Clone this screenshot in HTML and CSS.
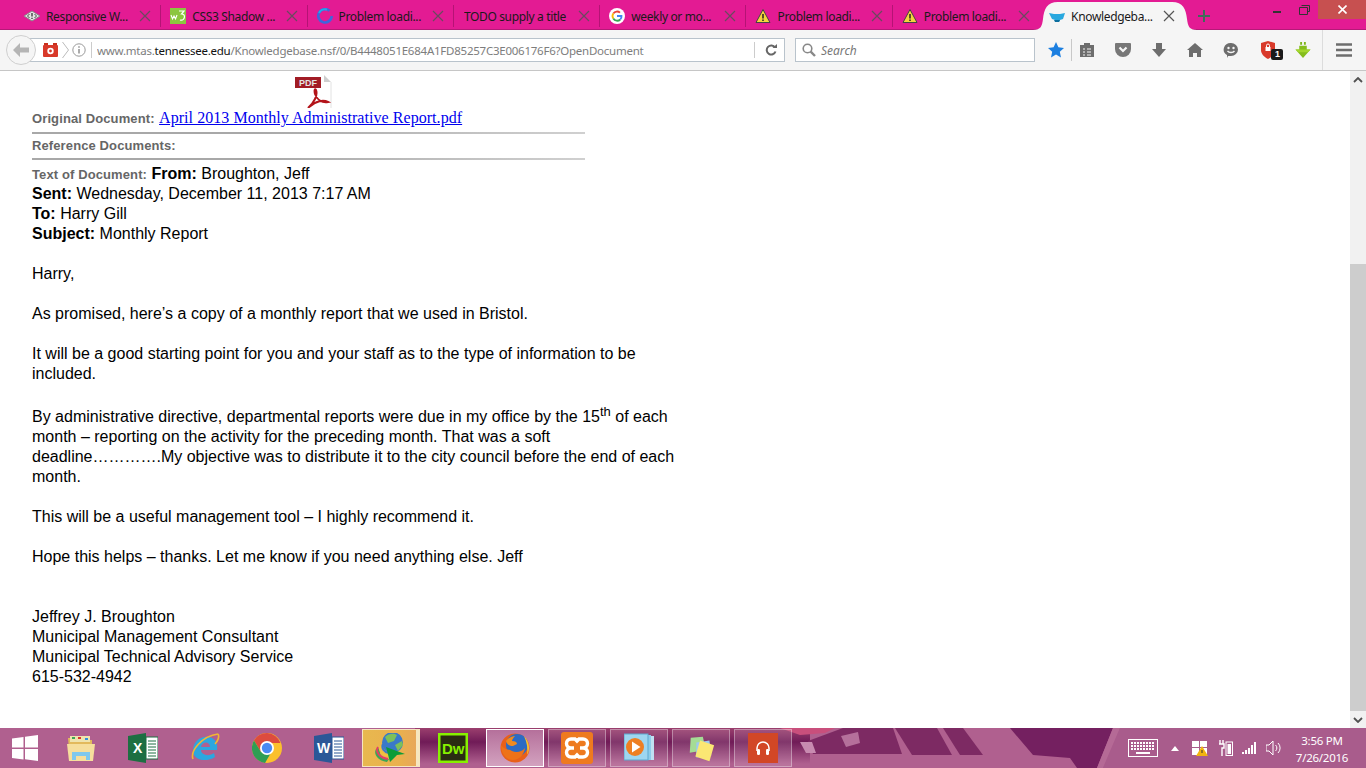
FILE: index.html
```html
<!DOCTYPE html>
<html lang="en">
<head>
<meta charset="utf-8">
<title>Knowledgebase</title>
<link rel="stylesheet" href="styles.css">
</head>
<body>
<div class="tabbar">
  <div class="tab"><svg class="fav" viewBox="0 0 16 16"><path d="M0 8l8-5 8 5-8 5z" fill="#e4e4e4" stroke="#888"/><path d="M5.500 6L3.500 8l2 2M10.500 6l2 2-2 2" fill="none" stroke="#444"/><path d="M8 5v3.500M8 9.800v1.200" stroke="#333" stroke-width="1.300"/></svg><span class="tt">Responsive W...</span><svg class="x" viewBox="0 0 12 12"><path d="M1 1l10 10M11 1L1 11"/></svg></div>
  <div class="tab"><svg class="fav" viewBox="0 0 16 16"><rect width="16" height="16" fill="#8cc63f"/><path d="M1 7l1.500 4 1.500-3 1.500 3L7 7" fill="none" stroke="#fff" stroke-width="1.100"/><path d="M9 3h5l-2.500 3c2.500 0 3 1.300 3 2.800S13 13 10 12" fill="none" stroke="#fff" stroke-width="1.200"/></svg><span class="tt">CSS3 Shadow ...</span><svg class="x" viewBox="0 0 12 12"><path d="M1 1l10 10M11 1L1 11"/></svg></div>
  <div class="tab"><svg class="fav" viewBox="0 0 16 16"><path d="M12.500 2.800A6.700 6.700 0 1 0 14.700 8" fill="none" stroke="#3f66dc" stroke-width="2.600"/><path d="M2 5A6.700 6.700 0 0 1 10 1.600" fill="none" stroke="#27a6e8" stroke-width="2.200"/></svg><span class="tt">Problem loadi...</span><svg class="x" viewBox="0 0 12 12"><path d="M1 1l10 10M11 1L1 11"/></svg></div>
  <div class="tab tab-plain"><span class="tt">TODO supply a title</span><svg class="x" viewBox="0 0 12 12"><path d="M1 1l10 10M11 1L1 11"/></svg></div>
  <div class="tab"><svg class="fav" viewBox="0 0 16 16"><circle cx="8" cy="8" r="8" fill="#fff"/><path d="M4.300 5.500A4.500 4.500 0 0 1 11 4.600" fill="none" stroke="#ea4335" stroke-width="1.800"/><path d="M4.300 5.500a4.500 4.500 0 0 0 0 5" fill="none" stroke="#fbbc05" stroke-width="1.800"/><path d="M4.300 10.500a4.500 4.500 0 0 0 7 1" fill="none" stroke="#34a853" stroke-width="1.800"/><path d="M11.300 11.500A4.500 4.500 0 0 0 12.500 8H8" fill="none" stroke="#4285f4" stroke-width="1.800"/></svg><span class="tt">weekly or mo...</span><svg class="x" viewBox="0 0 12 12"><path d="M1 1l10 10M11 1L1 11"/></svg></div>
  <div class="tab"><svg class="fav" viewBox="0 0 16 16"><path d="M8 1.500L15 14.500H1z" fill="#f5d33c" stroke="#444"/><path d="M8 6v4.500M8 11.500v1.500" stroke="#222" stroke-width="1.500"/></svg><span class="tt">Problem loadi...</span><svg class="x" viewBox="0 0 12 12"><path d="M1 1l10 10M11 1L1 11"/></svg></div>
  <div class="tab tab-nosep"><svg class="fav" viewBox="0 0 16 16"><path d="M8 1.500L15 14.500H1z" fill="#f5d33c" stroke="#444"/><path d="M8 6v4.500M8 11.500v1.500" stroke="#222" stroke-width="1.500"/></svg><span class="tt">Problem loadi...</span><svg class="x" viewBox="0 0 12 12"><path d="M1 1l10 10M11 1L1 11"/></svg></div>
  <div class="tab tab-active">
    <svg class="tab-shape" viewBox="0 0 164 28"><path d="M0 28C8 28 9 24 10 17 11 7 14 0 25 0H139C150 0 153 7 154 17 155 24 156 28 164 28z" fill="#f5f5f5"/></svg>
    <svg class="fav" viewBox="0 0 16 16"><path d="M0 5l5 1h6l5-1-2 6-3 1-1 2H7l-1-2-3-1z" fill="#29a8df"/><path d="M5 12h6l-1 2H6z" fill="#0c6f9f"/></svg><span class="tt">Knowledgeba...</span><svg class="x" viewBox="0 0 12 12"><path d="M1 1l10 10M11 1L1 11"/></svg>
  </div>
  <svg class="newtab" viewBox="0 0 12 12"><path d="M6 0v12M0 6h12"/></svg>
  <div class="winctl">
    <svg class="win-min" viewBox="0 0 8 2"><rect width="8" height="2" fill="#333"/></svg>
    <svg class="win-max" viewBox="0 0 11 10"><path d="M2.500.5h8v6h-2M.5 2.500h8v7h-8z" fill="none" stroke="#333"/></svg>
    <div class="win-close"><svg viewBox="0 0 9 9"><path d="M.5.500l8 8M8.500.500l-8 8" stroke="#fff" stroke-width="1.600"/></svg></div>
  </div>
</div>

<div class="toolbar">
  <div class="back"><svg viewBox="0 0 16 14"><path d="M7 0L0 7l7 7V9.500h9v-5H7z" fill="#b5b5b5"/></svg></div>
  <div class="urlbar">
    <svg class="cam" viewBox="0 0 15 14"><path d="M1 0h4v2H1zM10 0h4v2h-4z" fill="#c8301c"/><rect y="2" width="15" height="12" rx="1" fill="#d8392a"/><circle cx="7.500" cy="8" r="3.200" fill="#fff"/><circle cx="7.500" cy="8" r="1.400" fill="#d8392a"/></svg>
    <svg class="chev" viewBox="0 0 7 16"><path d="M.5 0l6 8-6 8" fill="none" stroke="#bbb"/></svg>
    <svg class="info" viewBox="0 0 14 14"><circle cx="7" cy="7" r="6.200" fill="none" stroke="#999"/><path d="M7 6v4.500M7 3.300v1.500" stroke="#888" stroke-width="1.400"/></svg>
    <span class="url-sep"></span>
    <span class="url"><span class="dim">www.mtas.</span>tennessee.edu<span class="dim">/Knowledgebase.nsf/0/B4448051E684A1FD85257C3E006176F6?OpenDocument</span></span>
    <span class="url-sep url-sep-r"></span>
    <svg class="reload" viewBox="0 0 12 12"><path d="M10 3.500A4.500 4.500 0 1 0 10.500 7.500" fill="none" stroke="#666" stroke-width="2"/><path d="M7.500 4H12V0z" fill="#666"/></svg>
  </div>
  <div class="search">
    <svg class="lens" viewBox="0 0 14 14"><circle cx="5.500" cy="5.500" r="4.300" fill="none" stroke="#888" stroke-width="1.600"/><path d="M8.700 8.700L13 13" stroke="#888" stroke-width="2.400"/></svg>
    <span>Search</span>
  </div>
  <div class="btn btn-star"><svg class="i16" viewBox="0 0 16 16"><path d="M8 0l2.400 5.300 5.600.6-4.200 3.800 1.200 5.800L8 12.600l-5 2.900 1.200-5.800L0 5.900l5.600-.6z" fill="#1c7fe0"/></svg></div>
  <div class="btn"><svg class="i16" viewBox="0 0 16 16"><path d="M1 3h4V1h6v2h4v12H1z" fill="#6d6d6d"/><path d="M4 7h2M8 7h4M4 10h2M8 10h4M4 13h2M8 13h4" stroke="#f5f5f5" stroke-width="1.200"/></svg></div>
  <div class="btn"><svg class="i16" viewBox="0 0 16 16"><path d="M1 1h14a1 1 0 0 1 1 1v5a8 8 0 0 1-16 0V2a1 1 0 0 1 1-1z" fill="#777"/><path d="M4.500 5.500L8 9l3.500-3.500" fill="none" stroke="#f5f5f5" stroke-width="2.200"/></svg></div>
  <div class="btn"><svg class="i16" viewBox="0 0 16 16"><path d="M5 1h6v6h4l-7 8-7-8h4z" fill="#6d6d6d"/></svg></div>
  <div class="btn"><svg class="i16" viewBox="0 0 16 16"><path d="M8 1l8 7h-2v7h-4v-4H6v4H2V8H0z" fill="#6d6d6d"/></svg></div>
  <div class="btn"><svg class="i16" viewBox="0 0 16 16"><path d="M8 1a7 6.500 0 0 1 0 13H5l-1 2v-3A7 6.500 0 0 1 8 1z" fill="#6d6d6d"/><circle cx="5.500" cy="6" r="1.200" fill="#f5f5f5"/><circle cx="10.500" cy="6" r="1.200" fill="#f5f5f5"/><path d="M4.500 9c1.500 2 5.500 2 7 0" fill="none" stroke="#f5f5f5" stroke-width="1.300"/></svg></div>
  <div class="btn btn-shield"><svg class="i22" viewBox="0 0 22 20"><path d="M7 1l7 2v7c0 4-3 7-7 9-4-2-7-5-7-9V3z" fill="#d93a2b"/><rect x="4.500" y="7" width="5" height="4" fill="#fff"/><path d="M5.500 7V5.500a1.500 1.500 0 0 1 3 0V7" fill="none" stroke="#fff"/><rect x="10" y="9" width="12" height="11" rx="2" fill="#1a1a1a"/></svg><span class="badge">1</span></div>
  <div class="btn btn-idm"><svg class="i16" viewBox="0 0 16 17"><path d="M5 0h2v3H5zM9 0h2v3H9z" fill="#7cb518"/><path d="M4 4h8v4h4l-8 9-8-9h4z" fill="#85bd1c"/><path d="M0 8h16l-3 3H3z" fill="#a3d62c"/></svg></div>
  <span class="tb-sep"></span>
  <div class="btn btn-menu"><svg class="i16" viewBox="0 0 16 14"><path d="M0 1.500h16M0 7h16M0 12.500h16" stroke="#6d6d6d" stroke-width="2.600"/></svg></div>
</div>

<div class="viewport">
  <main class="page">
    <svg class="pdf" viewBox="0 0 38 33"><path d="M9 0h21l7 7v26H9z" fill="#fff"/><path d="M37 7v26" stroke="#e2e2e2"/><path d="M30 0v7h7z" fill="#cfcfcf"/><rect x="1" y="2" width="26" height="11" fill="#a11c25"/><text x="5" y="11" class="pdf-label">PDF</text><path d="M14 33C20 28 24 20 22 15 21 13 20 15 21 19 23 25 28 28 34 27 30 25 22 25 14 33z" fill="none" stroke="#b3141a" stroke-width="2"/></svg>
    <div class="meta"><span class="label">Original Document:</span> <a class="doc" href="#">April 2013 Monthly Administrative Report.pdf</a></div>
    <div class="rule"></div>
    <div class="meta meta-ref"><span class="label">Reference Documents:</span></div>
    <div class="rule rule-b"></div>
    <div class="body">
      <p><span class="first-line"><span class="label">Text of Document:</span> <b>From:</b> Broughton, Jeff</span><b>Sent:</b> Wednesday, December 11, 2013 7:17 AM<br><b>To:</b> Harry Gill<br><b>Subject:</b> Monthly Report</p>
      <p>Harry,</p>
      <p>As promised, here’s a copy of a monthly report that we used in Bristol.</p>
      <p>It will be a good starting point for you and your staff as to the type of information to be included.</p>
      <p>By administrative directive, departmental reports were due in my office by the 15<sup>th</sup> of each month – reporting on the activity for the preceding month. That was a soft deadline………….My objective was to distribute it to the city council before the end of each month.</p>
      <p>This will be a useful management tool – I highly recommend it.</p>
      <p class="gap-2">Hope this helps – thanks. Let me know if you need anything else. Jeff</p>
      <p>Jeffrey J. Broughton<br>Municipal Management Consultant<br>Municipal Technical Advisory Service<br>615-532-4942</p>
    </div>
  </main>
  <div class="scrollbar">
    <div class="sb-btn"><svg viewBox="0 0 10 6"><path d="M1 5l4-4 4 4" fill="none" stroke="#505050" stroke-width="1.800"/></svg></div>
    <div class="sb-track"><div class="sb-thumb"></div></div>
    <div class="sb-btn"><svg viewBox="0 0 10 6"><path d="M1 1l4 4 4-4" fill="none" stroke="#505050" stroke-width="1.800"/></svg></div>
  </div>
</div>

<div class="taskbar">
  <svg class="wallpaper" viewBox="0 0 1366 40" preserveAspectRatio="none">
    <defs>
      <linearGradient id="band" x1="0" y1="0" x2="0" y2="1"><stop offset="0" stop-color="#9b3f6e"/><stop offset=".35" stop-color="#701b57"/><stop offset=".9" stop-color="#b0608f"/></linearGradient>
    </defs>
    <rect x="415" width="395" height="40" fill="url(#band)"/>
    <path d="M780 0H835L825 5 800 7z" fill="#c94f7c"/>
    <path d="M843 0H893L902 26H813L808 13z" fill="#7d2a63"/>
    <path d="M895 0H937L952 27H912z" fill="#7d2a63"/>
    <path d="M943 0H963L983 27H960z" fill="#7d2a63"/>
    <path d="M841 8L858 4 860 15 846 19z" fill="#b5709b"/>
    <path d="M800 14H812L816 25H806z" fill="#c88bb0"/>
    <path d="M1010 0H1113L1097 40H1077L1070 30 1033 27z" fill="#742060"/>
    <path d="M1113 0H1120L1103 40H1097z" fill="#b56a96"/>
    <path d="M1120 0H1366V40H1103z" fill="#a95c8c"/>
  </svg>
  <div class="start"><svg viewBox="0 0 26 26"><path d="M0 3.500L11.500 2v10.500H0zM13 1.800L26 0v12.500H13zM0 14h11.500v10.500L0 23zM13 14h13v12l-13-1.800z" fill="#fff"/></svg></div>
  <div class="tb"><svg class="ti" viewBox="0 0 30 30"><path d="M2 5h8l2 2h14v20H4z" fill="#e2b95c"/><path d="M4 3h20v6H4z" fill="#efe3ad"/><rect x="6" y="4" width="3" height="2" fill="#3aa655"/><rect x="12" y="4" width="3" height="2" fill="#d8392a"/><rect x="19" y="5" width="3" height="2" fill="#2f8fdc"/><path d="M1 11h28l-2 17H3z" fill="#f6de9c"/><path d="M6 27v-8h18v8h-4v-4H10v4z" fill="#7ec8ee"/></svg></div>
  <div class="tb"><svg class="ti" viewBox="0 0 30 30"><path d="M0 3l18-3v30L0 27z" fill="#1d6f42"/><rect x="18" y="4" width="12" height="22" fill="#fff" stroke="#1d6f42"/><path d="M20 8h8M20 11h8M20 14h8M20 17h8M20 20h8M20 23h8" stroke="#1d6f42"/><text x="5" y="20" class="ico-letter">X</text></svg></div>
  <div class="tb"><svg class="ti" viewBox="0 0 30 30"><path d="M3 18C3 8 11 3 18 4c8 1 10 7 9 13H11c0 5 8 7 13 3l1 4c-9 6-22 3-22-6zm8-4h9c0-6-8-6-9 0z" fill="#2ba7e0"/><path d="M3 26C0 18 12 3 28 1" fill="none" stroke="#f2b632" stroke-width="1.600"/><path d="M28 1c2 3-1 8-3 10" fill="none" stroke="#f2b632" stroke-width="1.600"/></svg></div>
  <div class="tb"><svg class="ti" viewBox="0 0 30 30"><circle cx="15" cy="15" r="15" fill="#fbc02d"/><path d="M15 0a15 15 0 0 0-13 7.500L9 19l6-9h13.500A15 15 0 0 0 15 0z" fill="#dd4b3e"/><path d="M2 7.500A15 15 0 0 0 13 30l7-12-11 1z" fill="#2f9e54"/><circle cx="15" cy="15" r="7" fill="#fff"/><circle cx="15" cy="15" r="5.200" fill="#4a8af4"/></svg></div>
  <div class="tb"><svg class="ti" viewBox="0 0 30 30"><path d="M0 3l18-3v30L0 27z" fill="#2b5797"/><rect x="18" y="4" width="12" height="22" fill="#fff" stroke="#2b5797"/><path d="M20 8h8M20 11h8M20 14h8M20 17h8M20 20h8M20 23h8" stroke="#2b5797"/><text x="3" y="20" class="ico-letter">W</text></svg></div>
  <div class="tb tb-idm"><svg class="ti ti-idm" viewBox="0 0 34 30"><path d="M3 16c-3 5 2 12 11 13l2-3C8 25 5 21 8 15z" fill="#3aa655"/><path d="M5 14c-3 5 2 11 10 12" fill="none" stroke="#e23f66" stroke-width="2"/><path d="M8 13c-3 4 1 9 8 10" fill="none" stroke="#f3c23a" stroke-width="2"/><path d="M10 11c-2 4 1 8 6 9" fill="none" stroke="#3a79c9" stroke-width="2"/><circle cx="19.500" cy="9.500" r="10.500" fill="#3a79c9"/><path d="M12 4c4-4 9-4 12-2l-3 6-6 2zM22 12l7-4 1 4-5 6z" fill="#7cc05a"/><path d="M13 14l19 7-8 1-7 7z" fill="#0c9c38"/></svg></div>
  <div class="tb"><svg class="ti" viewBox="0 0 30 30"><rect width="30" height="30" fill="#87f000"/><rect x="2.500" y="2.500" width="25" height="25" fill="#2a2d12"/><text x="4" y="21" class="ico-dw">Dw</text></svg></div>
  <div class="tb tb-open tb-current"><svg class="ti" viewBox="0 0 30 30"><circle cx="15" cy="15" r="14.500" fill="#e8601a"/><circle cx="17" cy="12" r="11" fill="#2c6bc4"/><path d="M24 3c3 3 5 7 5 12 0 3-1 5-2 7 1-6 0-13-3-19z" fill="#f8c22e"/><path d="M1 12c3 5 8 4 11 6 4 2 10 1 13-3-1 7-6 12-12 12C6 27 1 20 1 12z" fill="#ee7218"/><path d="M6 8c2-3 6-5 9-5-2 2-3 4-3 5 3 0 5 1 5 3l-4 2c-3 0-6-1-7-5z" fill="#f08a1e"/></svg></div>
  <div class="tb tb-open"><svg class="ti ti-lg" viewBox="0 0 32 32"><rect width="32" height="32" rx="3" fill="#ee7a1f"/><path d="M13 16H10A4.500 4.500 0 0 1 10 7H14L16 9 18 7H22A4.500 4.500 0 0 1 22 16H19M13 16H10A4.500 4.500 0 0 0 10 25H14L16 23 18 25H22A4.500 4.500 0 0 0 22 16H19" fill="none" stroke="#fff" stroke-width="3.400"/></svg></div>
  <div class="tb tb-open"><svg class="ti" viewBox="0 0 30 30"><rect x="6" y="3" width="24" height="24" fill="#bfe0f2"/><rect x="3" y="2" width="24" height="25" fill="#8fcdea"/><rect y="1" width="24" height="26" fill="#9ed6f0" stroke="#5da9cf"/><circle cx="11" cy="14" r="9" fill="#ee7f22"/><path d="M8 8.500l8.500 5.500L8 19.500z" fill="#fff"/></svg></div>
  <div class="tb tb-open"><svg class="ti" viewBox="0 0 32 28"><path d="M5 3l13-1 3 14-17 3z" fill="#a5dc95"/><path d="M11 8l14-2 2 16-16 2z" fill="#9dc9ef"/><path d="M15 6l15 5-5 17-15-5z" fill="#fbe773"/></svg></div>
  <div class="tb tb-open"><div class="music"><svg viewBox="0 0 16 16"><path d="M2 11V8a6 6 0 0 1 12 0v3" fill="none" stroke="#fff" stroke-width="1.500"/><rect x="2" y="9" width="3" height="6" rx="1.200" fill="#fff"/><rect x="11" y="9" width="3" height="6" rx="1.200" fill="#fff"/></svg></div></div>
  <div class="tray">
    <svg class="kbd" viewBox="0 0 30 18"><rect x=".5" y=".5" width="29" height="17" fill="none" stroke="#fff"/><path d="M3 4h24M3 7h24M3 10h24" stroke="#fff" stroke-width="2" stroke-dasharray="2 1"/><path d="M8 14h14" stroke="#fff" stroke-width="2"/></svg>
    <svg class="up" viewBox="0 0 8 5"><path d="M4 0l4 5H0z" fill="#fff"/></svg>
    <svg class="flag" viewBox="0 0 16 16"><path d="M0 1h7v6H0zM8 1h7v6H8zM0 8h7v7H0zM8 8h7v7H8z" fill="#fff"/><path d="M10 6l6 10H4z" fill="#f2b40f"/><path d="M10 10v3" stroke="#333"/></svg>
    <svg class="batt" viewBox="0 0 15 16"><path d="M2 0v4M5 0v4M1 4h5v4H4v8" fill="none" stroke="#fff" stroke-width="1.400"/><rect x="8" y="2" width="6.500" height="13.500" fill="none" stroke="#fff"/><rect x="9.500" y="4" width="3.500" height="10" fill="#fff"/></svg>
    <svg class="sig" viewBox="0 0 16 12"><path d="M1 10h2v2H1zM4 8h2v4H4zM7 6h2v6H7zM10 3h2v9h-2zM13 0h2v12h-2z" fill="#fff"/></svg>
    <svg class="vol" viewBox="0 0 16 14"><path d="M0 4h3l4-4v14l-4-4H0z" fill="none" stroke="#fff"/><path d="M9.500 4a4 4 0 0 1 0 6M12 2a7 7 0 0 1 0 10" fill="none" stroke="#fff"/></svg>
    <div class="clock"><div>3:56 PM</div><div>7/26/2016</div></div>
  </div>
</div>
</body>
</html>
```
FILE: styles.css
```css
* { box-sizing: border-box; }
html, body { margin: 0; height: 100%; overflow: hidden; }
body { width: 1366px; height: 768px; display: flex; flex-direction: column; background: #fff; font-family: "Liberation Sans", Arial, sans-serif; }

.tabbar { height: 30px; flex: none; display: flex; align-items: center; padding: 3px 0 0 15px; background: #e31b93; border-bottom: 1px solid #b51978; font-family: "Noto Sans", sans-serif; font-size: 12px; letter-spacing: -.35px; color: #1a1a1a; }
.tab { position: relative; width: 146.3px; height: 22px; flex: none; display: flex; align-items: center; padding: 0 9px 0 9px; border-right: 1px solid rgba(60,0,40,.28); }
.tab-nosep { border-right: 0; }
.tab-plain { padding-left: 10px; }
.fav { width: 16px; height: 16px; flex: none; margin-right: 6px; }
.tt { flex: 1; white-space: nowrap; overflow: hidden; }
.x { width: 12px; height: 12px; flex: none; fill: none; stroke: #6b4a5f; stroke-width: 1.200; }
.tab-active { width: 150px; border-right: 0; padding-left: 10px; padding-right: 14px; }
.tab-active .x { stroke: #555; }
.tab-shape { position: absolute; left: -6px; top: -3px; width: 164px; height: 28px; }
.tab-active .fav, .tab-active .tt, .tab-active .x { position: relative; }
.newtab { width: 12px; height: 12px; flex: none; margin-left: 9px; fill: none; stroke: #3f6b5a; stroke-width: 2; }
.winctl { margin: -3px 0 0 auto; align-self: flex-start; display: flex; align-items: flex-start; }
.win-min { width: 8px; height: 2px; margin: 11px 0 0; }
.win-max { width: 11px; height: 10px; margin: 5px 0 0 18px; }
.win-close { width: 48px; height: 19px; margin-left: 8px; background: #c75050; display: flex; align-items: center; justify-content: center; }
.win-close svg { width: 9px; height: 9px; }

.toolbar { height: 41px; flex: none; display: flex; align-items: center; background: #f5f5f5; border-bottom: 1px solid #c6c6c6; padding-left: 6px; }
.back { position: relative; z-index: 1; width: 30px; height: 30px; flex: none; border-radius: 50%; background: #f5f5f5; border: 1px solid #cfcfcf; display: flex; align-items: center; justify-content: center; }
.back svg { width: 16px; height: 14px; }
.urlbar { width: 755px; height: 24px; margin-left: -6px; flex: none; display: flex; align-items: center; background: #fff; border: 1px solid #b9c3cc; font-family: "Noto Sans", sans-serif; font-size: 11.5px; letter-spacing: -.24px; color: #111; white-space: nowrap; }
.cam { width: 15px; height: 14px; margin-left: 12px; flex: none; }
.chev { width: 7px; height: 16px; margin-left: 4px; flex: none; }
.info { width: 14px; height: 14px; margin-left: 3px; flex: none; }
.url-sep { width: 1px; height: 16px; background: #ccc; margin-left: 5px; flex: none; }
.url { margin-left: 5px; width: 657px; flex: none; overflow: hidden; }
.dim { color: #7d7d7d; }
.url-sep-r { margin-left: 0; }
.reload { width: 12px; height: 12px; margin-left: 10px; flex: none; }
.search { width: 240px; height: 24px; margin-left: 10px; flex: none; display: flex; align-items: center; gap: 5px; padding-left: 6px; background: #fff; border: 1px solid #b9c3cc; font-family: "Noto Sans", sans-serif; font-style: italic; font-size: 12px; color: #777; }
.lens { width: 14px; height: 14px; flex: none; }
.btn { width: 30px; height: 24px; flex: none; margin-left: 6px; display: flex; align-items: center; justify-content: center; position: relative; }
.btn-star { width: 31px; margin-left: 6px; height: 22px; border-right: 1px solid #c8c8c8; }
.btn-star + .btn { margin-left: 0; }
.btn-shield { margin-left: 11px; }
.btn-idm { margin-left: 1px; }
.btn-menu { width: 30px; margin-left: 6px; }
.i16 { width: 16px; height: 16px; }
.i22 { width: 22px; height: 20px; }
.badge { position: absolute; left: 18px; top: 11px; font: bold 9px "Liberation Sans", sans-serif; color: #fff; }
.tb-sep { width: 1px; height: 40px; margin-left: 4px; background: #dcdcdc; flex: none; }

.viewport { flex: 1; min-height: 0; display: flex; }
.page { flex: 1; padding: 4px 0 0 32px; overflow: hidden; }
.pdf { display: block; width: 38px; height: 33px; margin-left: 262px; }
.pdf-label { font: bold 9px "Liberation Sans", sans-serif; fill: #e4e4e4; }
.meta { height: 20px; line-height: 20px; width: 553px; white-space: nowrap; }
.meta-ref { margin-top: 1px; }
.label { font-size: 13px; font-weight: bold; color: #666; letter-spacing: .11px; }
.doc { font-family: "Liberation Serif", serif; font-size: 16px; color: #00e; letter-spacing: .05px; }
.rule { width: 553px; height: 2px; margin-top: 4px; background: linear-gradient(90deg, #a8a8a8, #a8a8a8 40%, #d0d0d0); }
.rule-b { margin-top: 3px; }
.body { width: 645px; margin-top: 4px; font-size: 16px; line-height: 20px; color: #000; }
.body p { margin: 0 0 20px; }
.body .gap-2 { margin-bottom: 40px; }
.first-line { display: block; height: 20px; }
sup { font-size: 13px; line-height: 16px; }

.scrollbar { width: 16px; flex: none; display: flex; flex-direction: column; background: #f1f1f1; }
.sb-btn { height: 17px; flex: none; display: flex; align-items: center; justify-content: center; }
.sb-btn svg { width: 10px; height: 6px; }
.sb-track { flex: 1; padding-top: 176px; display: flex; }
.sb-thumb { flex: 1; background: #cdcdcd; }

.taskbar { position: relative; height: 40px; flex: none; display: flex; align-items: center; gap: 4px; background: #b0608f; overflow: hidden; }
.wallpaper { position: absolute; inset: 0; width: 100%; height: 100%; }
.start, .tb, .tray { position: relative; }
.start { width: 48px; height: 40px; padding-left: 2px; display: flex; align-items: center; justify-content: center; }
.start svg { width: 26px; height: 26px; }
.tb { width: 58px; height: 38px; flex: none; display: flex; align-items: center; justify-content: center; }
.ti { width: 30px; height: 30px; }
.ti-lg { width: 32px; height: 32px; }
.ti-idm { width: 34px; }
.tb-idm { background: linear-gradient(90deg, #e8b84f, #eab04e 70%, #e8a75b); border: 1px solid #f6e6c0; border-right-width: 4px; }
.tb-open { background: rgba(255,255,255,.12); border: 1px solid rgba(255,255,255,.35); }
.tb-current { background: linear-gradient(#b5709b, #d3a2bf); border-color: #fff; }
.ico-letter { font: bold 14px "Liberation Sans", sans-serif; fill: #fff; }
.ico-dw { font: bold 15px "Liberation Sans", sans-serif; fill: #87f000; }
.music { width: 30px; height: 30px; background: #d24726; display: flex; align-items: center; justify-content: center; }
.music svg { width: 16px; height: 16px; }
.tray { margin-left: auto; display: flex; align-items: center; height: 40px; color: #fff; }
.kbd { width: 30px; height: 18px; flex: none; }
.up { width: 8px; height: 5px; margin-left: 13px; flex: none; }
.flag { width: 16px; height: 16px; margin-left: 13px; flex: none; }
.batt { width: 15px; height: 16px; margin-left: 10px; flex: none; }
.sig { width: 16px; height: 12px; margin-left: 8px; flex: none; }
.vol { width: 16px; height: 14px; margin-left: 9px; flex: none; }
.clock { width: 70px; margin-left: 5px; margin-right: 9px; padding-top: 2px; text-align: center; font-family: "Noto Sans", sans-serif; font-size: 11.5px; letter-spacing: -.25px; line-height: 17px; }
```
